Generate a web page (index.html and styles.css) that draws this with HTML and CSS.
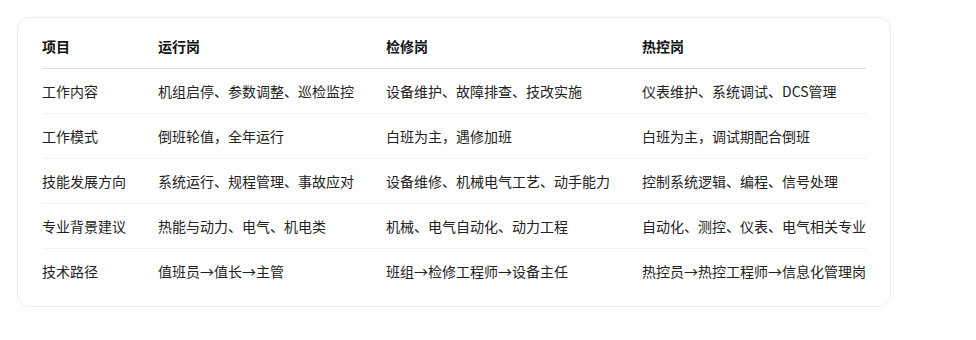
FILE: index.html
```html
<!DOCTYPE html>
<html lang="zh-CN">
<head>
<meta charset="utf-8">
<link rel="stylesheet" href="styles.css">
</head>
<body>
<div class="card">
  <table class="grid">
    <colgroup>
      <col class="c1"><col class="c2"><col class="c3"><col class="c4">
    </colgroup>
    <thead>
      <tr><th>项目</th><th>运行岗</th><th>检修岗</th><th>热控岗</th></tr>
    </thead>
    <tbody>
      <tr><td>工作内容</td><td>机组启停、参数调整、巡检监控</td><td>设备维护、故障排查、技改实施</td><td>仪表维护、系统调试、DCS管理</td></tr>
      <tr><td>工作模式</td><td>倒班轮值，全年运行</td><td>白班为主，遇修加班</td><td>白班为主，调试期配合倒班</td></tr>
      <tr><td>技能发展方向</td><td>系统运行、规程管理、事故应对</td><td>设备维修、机械电气工艺、动手能力</td><td>控制系统逻辑、编程、信号处理</td></tr>
      <tr><td>专业背景建议</td><td>热能与动力、电气、机电类</td><td>机械、电气自动化、动力工程</td><td>自动化、测控、仪表、电气相关专业</td></tr>
      <tr><td>技术路径</td><td>值班员→值长→主管</td><td>班组→检修工程师→设备主任</td><td>热控员→热控工程师→信息化管理岗</td></tr>
    </tbody>
  </table>
</div>
</body>
</html>
```

FILE: styles.css
```css
html, body {
  margin: 0;
  padding: 0;
  background: #ffffff;
}
body {
  padding: 17px 0 0 17px;
  font-family: "Noto Sans CJK SC", "Noto Sans", sans-serif;
  font-size: 14px;
  color: #222222;
}
.card {
  width: 824px;
  padding: 6px 24px 13px 24px;
  border: 1px solid #ededed;
  border-radius: 12px;
  background: #ffffff;
}
.grid {
  width: 824px;
  table-layout: fixed;
  border-collapse: collapse;
  border-spacing: 0;
}
.c1 { width: 116px; }
.c2 { width: 228px; }
.c3 { width: 256px; }
.c4 { width: 224px; }
.grid th, .grid td {
  text-align: left;
  padding: 12px 0;
  line-height: 20px;
  white-space: nowrap;
  overflow: visible;
}
.grid th {
  font-weight: 700;
  color: #111111;
  border-bottom: 1px solid #dcdcdc;
}
.grid td {
  font-weight: 400;
  border-bottom: 1px solid #efefef;
}
.grid tbody tr:last-child td {
  border-bottom: none;
}
```
